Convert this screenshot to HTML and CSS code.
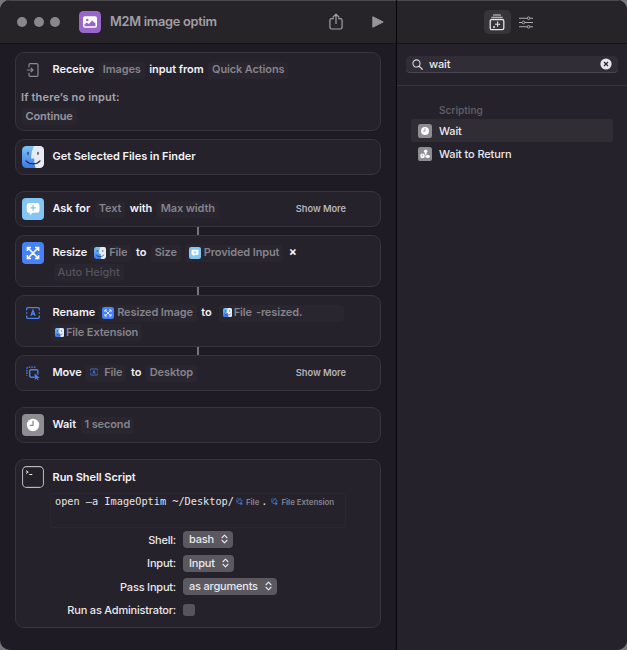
FILE: index.html
```html
<!DOCTYPE html>
<html lang="en">
<head>
<meta charset="utf-8">
<title>M2M image optim</title>
<link rel="stylesheet" href="styles.css">
</head>
<body>
<svg class="defs" width="0" height="0">
  <defs>
    <linearGradient id="blue" x1="0" y1="0" x2="0" y2="1"><stop offset="0" stop-color="#7cc4f4"/><stop offset="1" stop-color="#3d78e8"/></linearGradient>
    <clipPath id="round"><rect width="22" height="22" rx="4.5"/></clipPath>
    <symbol id="finder" viewBox="0 0 22 22">
      <g clip-path="url(#round)"><rect width="22" height="22" fill="url(#blue)"/><path d="M12 0C9.900 4 9.200 8 9 12.500h3.200c0 3.500.4 6.500 1.300 9.500H22V0z" fill="#e9ebf2"/></g>
      <path d="M6 6.300v1.900M16 6.300v1.900M4 14.800c4 4 10.500 4 14 0" fill="none" stroke="#1d2b4e" stroke-width="1.200" stroke-linecap="round"/>
    </symbol>
    <symbol id="ask" viewBox="0 0 22 22">
      <rect width="22" height="22" rx="4" fill="#83c6f5"/>
      <path d="M7 5h8.200a2.300 2.300 0 0 1 2.300 2.300v5.200a2.300 2.300 0 0 1-2.300 2.300h-4.700L7.800 17.500v-2.700H7a2.300 2.300 0 0 1-2.300-2.300V7.300A2.300 2.300 0 0 1 7 5z" fill="#fff"/>
      <path d="M11.100 7v5.600M8.300 9.800h5.600" stroke="#83c6f5" stroke-width="1.300"/>
    </symbol>
    <symbol id="resize" viewBox="0 0 22 22">
      <rect width="22" height="22" rx="4" fill="#4781f6"/>
      <path d="M6 6l10 10M16 6L6 16M5.400 9V5.400H9M13 5.400h3.600V9M16.600 13v3.600H13M9 16.600H5.400V13" fill="none" stroke="#fff" stroke-width="1.500"/>
    </symbol>
    <symbol id="rename" viewBox="0 0 14 12">
      <path d="M3.500.7h7M3.500 11.300h7M.7 3.500V1.700a1 1 0 0 1 1-1H3.500M10.500.7h1.800a1 1 0 0 1 1 1v1.800M.7 8.500v1.800a1 1 0 0 0 1 1h1.800M13.300 8.500v1.800a1 1 0 0 1-1 1h-1.800M.7 5.300v1.400M13.300 5.300v1.400M4.900 8.700L7 3.300l2.100 5.400M5.600 7h2.800" fill="none" stroke="#4a82ee" stroke-width="1.300"/>
    </symbol>
    <symbol id="move" viewBox="0 0 14 14">
      <path d="M9.500 1.200H2.200a1.300 1.300 0 0 0-1.300 1.300v7.300" fill="none" stroke="#4a82ee" stroke-width="1.300" stroke-dasharray="1.700 .9"/>
      <path d="M8.500 11.200H5a1.300 1.300 0 0 1-1.300-1.300V5A1.300 1.300 0 0 1 5 3.700h5.500A1.300 1.300 0 0 1 11.800 5v3.500" fill="none" stroke="#4a82ee" stroke-width="1.400"/>
      <path d="M8.600 7.200l5.200 4.700-2.200.1 1 1.700-1 .5-1-1.800-1.800 1.600z" fill="#4a82ee"/>
    </symbol>
    <symbol id="clock" viewBox="0 0 22 22">
      <rect width="22" height="22" rx="4" fill="#8e8e92"/><circle cx="11" cy="11" r="6.200" fill="#fff"/>
      <path d="M11 6.800v4.500H7.700" fill="none" stroke="#8e8e92" stroke-width="1.300"/>
    </symbol>
    <symbol id="chev" viewBox="0 0 8 12"><path d="M1 4.500l3-3.100 3 3.100M1 7.500l3 3.100 3-3.100" fill="none" stroke="#e8e8ea" stroke-width="1.300" stroke-linecap="round" stroke-linejoin="round"/></symbol>
  </defs>
</svg>
<div class="window">
  <main class="editor">
    <header class="bar">
      <div class="lights"><i></i><i></i><i></i></div>
      <svg class="app" viewBox="0 0 22 22"><rect width="22" height="22" rx="4.500" fill="#9967cb"/><rect x="4" y="5.300" width="14" height="11.400" rx="2" fill="#fff"/><circle cx="8.300" cy="9" r="1.300" fill="#9967cb"/><path d="M5.500 15.200v-2l2.300-1.600 2 1.400 3.400-3.500 3.300 3v2.700z" fill="#9967cb"/></svg>
      <h1>M2M image optim</h1>
      <svg class="share" viewBox="0 0 14 17"><path d="M4.300 5.700H2.700A1.800 1.800 0 0 0 .9 7.500v6.700A1.800 1.800 0 0 0 2.700 16h8.600a1.800 1.800 0 0 0 1.800-1.800V7.500a1.800 1.800 0 0 0-1.800-1.800H9.700M7 10.500V1.200M4.100 4L7 1.100 9.900 4" fill="none" stroke="#a3a2a7" stroke-width="1.200" stroke-linecap="round" stroke-linejoin="round"/></svg>
      <svg class="play" viewBox="0 0 12 12"><path d="M.8.800v10.400L11.200 6z" fill="#96959a" stroke="#96959a" stroke-linejoin="round"/></svg>
    </header>
    <section class="card receive">
      <div class="line">
        <svg class="glyph" viewBox="0 0 14 14"><path d="M3 4.300V2A1.300 1.300 0 0 1 4.300.7h6.400A1.300 1.300 0 0 1 12 2v10a1.300 1.300 0 0 1-1.300 1.300H4.300A1.300 1.300 0 0 1 3 12V9.700M.8 7h6M4.800 4.800L7 7 4.800 9.200" fill="none" stroke="#8c8a91" stroke-width="1.200"/></svg>
        <b>Receive</b><span class="pill">Images</span><b>input from</b><span class="pill">Quick Actions</span>
      </div>
      <p class="question">If there’s no input:</p>
      <div><span class="pill continue">Continue</span></div>
    </section>
    <section class="card finder">
      <div class="line"><svg class="icon"><use href="#finder"/></svg><b>Get Selected Files in Finder</b></div>
    </section>
    <section class="card ask">
      <div class="line"><svg class="icon"><use href="#ask"/></svg><b>Ask for</b><span class="pill">Text</span><b>with</b><span class="pill">Max width</span><span class="more">Show More</span></div>
    </section>
    <div class="link"></div>
    <section class="card double">
      <div class="line"><svg class="icon"><use href="#resize"/></svg><b>Resize</b><span class="pill file"><svg class="mini"><use href="#finder"/></svg>File</span><b>to</b><span class="pill">Size</span><span class="pill provided"><svg class="mini"><use href="#ask"/></svg>Provided Input</span><b class="times">×</b></div>
      <div class="second"><span class="pill auto">Auto Height</span></div>
    </section>
    <div class="link"></div>
    <section class="card double">
      <div class="line"><svg class="glyph"><use href="#rename"/></svg><b>Rename</b><span class="pill file"><svg class="mini"><use href="#resize"/></svg>Resized Image</span><b>to</b><span class="pill name"><svg class="tiny"><use href="#finder"/></svg>File <span class="suffix">-resized.</span></span></div>
      <div class="second"><span class="pill extension"><svg class="tiny"><use href="#finder"/></svg>File Extension</span></div>
    </section>
    <div class="link"></div>
    <section class="card">
      <div class="line"><svg class="glyph"><use href="#move"/></svg><b>Move</b><span class="pill moved"><svg><use href="#rename"/></svg>File</span><b>to</b><span class="pill">Desktop</span><span class="more">Show More</span></div>
    </section>
    <section class="card wait">
      <div class="line"><svg class="icon"><use href="#clock"/></svg><b>Wait</b><span class="pill">1 second</span></div>
    </section>
    <section class="card shell">
      <div class="line"><svg class="icon" viewBox="0 0 22 22"><rect x=".6" y=".6" width="20.800" height="20.800" rx="4" fill="#16151a" stroke="#b9b8bc" stroke-width="1.100"/><rect x="2" y="2" width="18" height="18" rx="3" fill="#232228"/><path d="M4 4.700l2.200 1.400L4 7.500M7.300 8.500h3" fill="none" stroke="#eee"/></svg><b>Run Shell Script</b></div>
      <div class="code"><code>open –a ImageOptim ~/Desktop/</code><svg><use href="#move"/></svg><span>File</span><code class="dot">.</code><svg><use href="#move"/></svg><span>File Extension</span></div>
      <div class="options">
        <label>Shell:</label><span class="select">bash<svg><use href="#chev"/></svg></span>
        <label>Input:</label><span class="select">Input<svg><use href="#chev"/></svg></span>
        <label>Pass Input:</label><span class="select">as arguments<svg><use href="#chev"/></svg></span>
        <label>Run as Administrator:</label><span class="check"></span>
      </div>
    </section>
  </main>
  <aside class="library">
    <header class="bar tools">
      <span class="tab"><svg viewBox="0 0 16 17"><path d="M4.500 1h7M2.800 3.300h10.400" stroke="#d9d8dc" stroke-width="1.100" stroke-linecap="round"/><rect x="1.200" y="5.500" width="13.600" height="10.200" rx="1.600" fill="none" stroke="#e4e3e7" stroke-width="1.300"/><path d="M8.600 7.600v5.200M6 10.200h5.200M5 12v1.900M4 13h2" stroke="#e4e3e7" stroke-width="1.100"/></svg></span>
      <svg class="sliders" viewBox="0 0 14 13"><path d="M0 2.200h8.200M11 2.200h3M0 6.500h3M5.800 6.500H14M0 10.800h8.200M11 10.800h3" stroke="#aaa9ae" stroke-width="1.100"/><g fill="none" stroke="#aaa9ae"><circle cx="9.600" cy="2.200" r="1.300"/><circle cx="4.400" cy="6.500" r="1.300"/><circle cx="9.600" cy="10.800" r="1.300"/></g></svg>
    </header>
    <div class="searchbar"><div class="field">
      <svg class="lens" viewBox="0 0 12 12"><circle cx="4.900" cy="4.900" r="3.900" fill="none" stroke="#d8d7dc" stroke-width="1.200"/><path d="M7.900 7.900l3.300 3.300" stroke="#d8d7dc" stroke-width="1.300" stroke-linecap="round"/></svg>
      <span>wait</span>
      <svg class="clear" viewBox="0 0 12 12"><circle cx="6" cy="6" r="5.600" fill="#e6e5e9"/><path d="M4 4l4 4M8 4L4 8" stroke="#29272e" stroke-width="1.200"/></svg>
    </div></div>
    <h2>Scripting</h2>
    <div class="result selected"><svg><use href="#clock"/></svg>Wait</div>
    <div class="result"><svg viewBox="0 0 22 22"><rect width="22" height="22" rx="4" fill="#8e8e92"/><g fill="#fff"><circle cx="12" cy="6.500" r="2.700"/><path d="M10.700 8h2.600v4h-2.600z"/><ellipse cx="15" cy="14.700" rx="3.800" ry="2.500"/><circle cx="7" cy="14" r="3.600"/></g><path d="M7 11.800v2.500H5.300" fill="none" stroke="#8e8e92"/></svg>Wait to Return</div>
  </aside>
</div>
</body>
</html>
```

FILE: styles.css
```css
* { box-sizing: border-box; }
body { margin: 0; background: #77767a; font: 500 11px/14px Inter, "Liberation Sans", sans-serif; letter-spacing: -.05px; color: #e9e8ec; }
.defs { position: absolute; }
svg { display: block; flex: none; }
.window { display: flex; width: 627px; height: 650px; border-radius: 10px; overflow: hidden; background: #1e1b24; }
.editor { width: 397px; border-right: 1px solid #060508; display: flex; flex-direction: column; }
.bar { height: 44px; flex: none; display: flex; align-items: center; border-top: 1px solid #4b494f; border-bottom: 1px solid #151319; background: #272429; }
.editor .bar { padding-left: 17px; }
.lights { display: flex; gap: 6.500px; }
.lights i { width: 10px; height: 10px; border-radius: 50%; background: #89878c; }
.app { width: 22px; height: 22px; margin-left: 19px; }
h1 { margin: 0 0 0 9px; width: 219px; font-size: 12.800px; line-height: 16px; font-weight: 600; letter-spacing: -.28px; color: #a19fa5; }
.share { width: 14px; height: 17px; margin-top: -2px; }
.play { width: 12px; height: 12px; margin-left: 29px; }
.card { width: 366px; height: 36px; margin-left: 15px; flex: none; border: 1px solid #37343d; border-radius: 9px; background: #25222b; padding: 6px; }
.receive { height: 79px; margin-top: 8px; }
.finder { margin-top: 8px; }
.ask, .wait { margin-top: 16px; }
.double { height: 52px; }
.shell { height: 169px; margin-top: 16px; }
.link { width: 2px; height: 8px; margin-left: 197px; background: #77757c; flex: none; }
.line { display: flex; align-items: center; height: 22px; }
.icon { width: 22px; height: 22px; margin-right: 8.500px; }
.glyph { width: 14px; height: 14px; margin: 0 12.500px 0 4px; }
b { font-weight: 600; white-space: nowrap; color: #f3f2f6; padding-bottom: 2px; }
.shell b { padding-bottom: 0; }
.pill { display: inline-flex; align-items: center; height: 17px; margin: 0 4.500px; padding: 0 4px 2px; border-radius: 3px; background: #29262f; color: #85838b; font-weight: 600; letter-spacing: -.13px; white-space: nowrap; }
.question { margin: 9px 0 4px -1px; font-weight: 600; letter-spacing: .15px; color: #a7a5ad; }
.continue { margin-left: -.500px; padding-bottom: 1px; color: #98969e; }
.more { margin-left: auto; margin-right: 28px; padding-bottom: 1px; font-size: 9.300px; font-weight: 600; color: #b5b3bb; }
.mini { width: 12px; height: 12px; margin: 1px 3px 0 0; }
.tiny { width: 9px; height: 9px; margin-right: 2px; }
.file { margin-left: 3px; }
.second { display: flex; padding-left: 27px; }
.second .pill { padding-bottom: 1px; }
.auto { color: #56535c; font-weight: 450; letter-spacing: 0; }
.provided { margin-left: -.500px; }
.name { width: 125px; margin-left: 7px; }
.suffix { margin-left: 4px; }
.moved svg { width: 8px; height: 8px; margin-right: 6px; }
.extension { margin-left: 2px; }
.times { margin-left: 1px; font-size: 12px; font-weight: 700; }
.code { display: flex; align-items: flex-start; width: 296px; height: 35px; margin: 5px 0 0 28px; padding: 0 4px; border: 1px solid #2b2831; border-radius: 3px; font-size: 7.900px; font-weight: 600; letter-spacing: -.03px; color: #85838c; white-space: nowrap; }
.code code { font: 10.250px/14px "DejaVu Sans Mono", monospace; letter-spacing: 0; color: #e5e4e8; }
.code svg { width: 7px; height: 7px; margin: 4px 3px 0 2px; }
.code span { line-height: 16px; }
.code .dot { margin: 0 2px; }
.options { display: grid; grid-template-columns: 154px auto; grid-auto-rows: 23.500px; column-gap: 6.500px; align-items: center; justify-content: start; letter-spacing: -.2px; }
.options label { text-align: right; }
.select { justify-self: start; display: flex; align-items: center; height: 17px; padding: 0 5px 1px 6.500px; border-radius: 4px; background: #5b595f; }
.select svg { width: 7px; height: 10px; margin-left: 7px; }
.check { width: 12px; height: 12px; border-radius: 3px; background: #57545b; }
.library { flex: 1; background: #25222b; letter-spacing: -.12px; }
.tools { justify-content: center; }
.tab { display: grid; place-items: center; width: 27px; height: 24px; border-radius: 5px; background: #37343a; }
.tab svg { width: 16px; height: 17px; }
.sliders { width: 14px; height: 13px; margin-left: 8px; margin-right: 8px; }
.searchbar { height: 42px; padding: 12px 9px 0; border-bottom: 1px solid #38353e; }
.field { display: flex; align-items: center; height: 17px; padding: 0 6px; border-radius: 4px; background: #302d36; border-bottom: 1px solid #4a4750; }
.lens { width: 11px; height: 11px; }
.field span { flex: 1; margin-left: 6px; }
.clear { width: 12px; height: 12px; }
h2 { margin: 17px 0 2px 42px; font-size: 10px; line-height: 14px; font-weight: 600; letter-spacing: 0; color: #5f5c65; }
.result { display: flex; align-items: center; height: 23px; margin: 0 14px; padding-left: 7px; border-radius: 3px; }
.result svg { width: 14px; height: 14px; margin-right: 7px; }
.selected { background: #302d35; }
```
